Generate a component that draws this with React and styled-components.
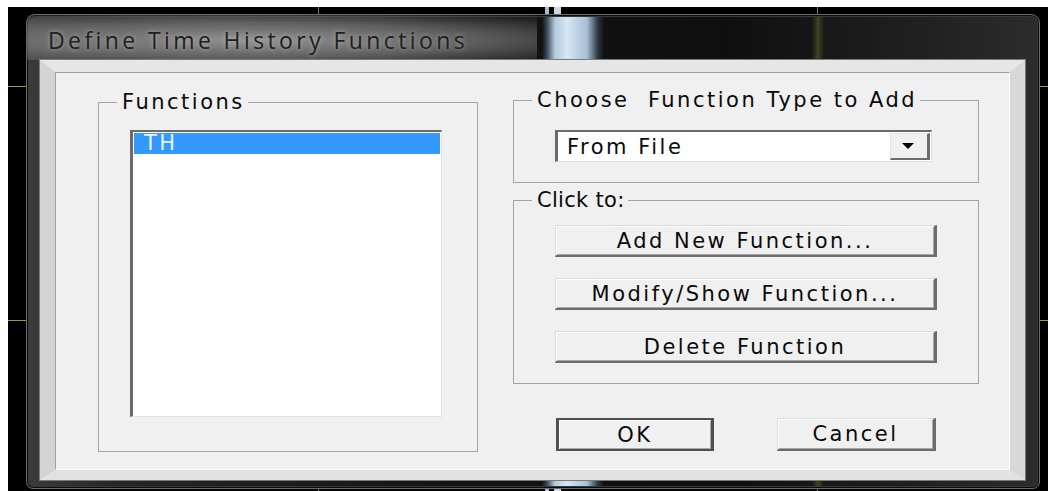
import React from "react";
import styled, { createGlobalStyle } from "styled-components";

const GlobalStyle = createGlobalStyle`
  * {
    box-sizing: border-box;
  }
  html, body {
    margin: 0;
    padding: 0;
    background: #fff;
  }
  body {
    width: 1048px;
    height: 491px;
    overflow: hidden;
    font-family: "DejaVu Sans", "Liberation Sans", sans-serif;
  }
`;

// dark CAD canvas behind the dialog, with a few drawing lines peeking out
const Desktop = styled.div`
  margin: 7px 0 0 8px;
  width: 1040px;
  height: 484px;
  padding: 7px 0 0 18px;
  overflow: hidden;
  background-color: #000;
  background-image:
    linear-gradient(90deg, transparent 310px, #7c7c3c 310px, #7c7c3c 311px, transparent 311px),
    linear-gradient(90deg, transparent 809px, #7c7c3c 809px, #7c7c3c 810px, transparent 810px),
    linear-gradient(90deg, transparent 537px, #a9bccd 537px, #a9bccd 541px, transparent 541px, transparent 546px, #c8d8e6 546px, #c8d8e6 553px, transparent 553px),
    linear-gradient(180deg, transparent 79px, #9a9a48 79px, #9a9a48 80px, transparent 80px, transparent 313px, #9a9a48 313px, #9a9a48 314px, transparent 314px);
`;

const Window = styled.div`
  width: 1014px;
  height: 475px;
  display: flex;
  flex-direction: column;
  padding-bottom: 8px;
  border: 1px solid #6c6c6c;
  border-radius: 9px 9px 7px 7px;
  box-shadow: inset 0 0 0 1px #0c0c0c, inset 0 0 0 2px #383838;
  background:
    linear-gradient(90deg, transparent 515px, rgba(90, 120, 150, 0.55) 520px, rgba(200, 222, 242, 0.9) 528px, #d6e6f4 540px, rgba(185, 210, 235, 0.9) 560px, rgba(70, 95, 120, 0.45) 571px, transparent 577px),
    linear-gradient(90deg, transparent 785px, rgba(120, 120, 50, 0.45) 791px, transparent 797px),
    linear-gradient(90deg, #3b3b3b 0, #262626 90px, #141414 420px, #0f0f0f 700px, #1f1f1f 880px, #2c2c2c 100%);
`;

const TitleBar = styled.div`
  height: 45px;
  display: flex;
  align-items: stretch;
`;

const Title = styled.div`
  display: flex;
  align-items: center;
  width: 510px;
  padding: 4px 0 0 21px;
  font-family: "Open Sans", "Noto Sans", sans-serif;
  font-size: 23px;
  letter-spacing: 3.4px;
  color: #202020;
  white-space: nowrap;
  text-shadow: 0 0 5px rgba(215, 215, 215, 0.6);
  background: radial-gradient(ellipse 100% 85% at 44% 56%, rgba(165, 165, 165, 0.85), rgba(140, 140, 140, 0.6) 45%, rgba(90, 90, 90, 0.2) 78%, rgba(60, 60, 60, 0) 100%);
`;

const ClientArea = styled.div`
  flex: 1;
  display: flex;
  margin: 0 14px 0 13px;
  border-style: solid;
  border-width: 12px 15px 10px 15px;
  border-color: #e6e6e6 #d8d8d8 #e2e2e2 #d4d4d4;
  box-shadow: 0 0 0 1px #7a7a7a;
`;

const Panel = styled.div`
  flex: 1;
  display: flex;
  align-items: flex-start;
  gap: 35px;
  padding: 18px 0 0 42px;
  background: #f0f0f0;
  border: 1px solid;
  border-color: #a0a0a0 #fbfbfb #fbfbfb #a0a0a0;
  font-size: 21px;
  letter-spacing: 2.5px;
  color: #0a0a0a;
`;

const Group = styled.fieldset`
  margin: 0;
  min-inline-size: 0;
  width: ${p => p.$w}px;
  padding: ${p => p.$pad};
  border: 1px solid #a3a3a3;
`;

const Caption = styled.legend`
  margin-left: 18px;
  padding: 0 3px 0 5px;
  line-height: 22px;
  letter-spacing: ${p => p.$tight ? "0.3px" : "inherit"};
`;

const ListBox = styled.div`
  width: 312px;
  height: 287px;
  margin-left: 31px;
  padding: 1px;
  background: #fff;
  border-style: solid;
  border-width: 2px 1px 1px 3px;
  border-color: #6b6b6b #e2e2e2 #e2e2e2 #6b6b6b;
`;

const ListItem = styled.div`
  height: 21px;
  line-height: 21px;
  padding-left: 10px;
  background: ${p => p.$selected ? "#3399ff" : "transparent"};
  color: ${p => p.$selected ? "#e6f5ff" : "#111"};
`;

const Column = styled.div`
  width: 466px;
  margin-top: -2px;
  display: flex;
  flex-direction: column;
  gap: 6px;
`;

const Combo = styled.div`
  width: 377px;
  height: 32px;
  margin-left: 41px;
  display: flex;
  align-items: stretch;
  padding: 1px 1px 1px 9px;
  background: #fff;
  border-style: solid;
  border-width: 2px 1px 1px 3px;
  border-color: #6b6b6b #dedede #dedede #6b6b6b;
`;

const ComboText = styled.span`
  flex: 1;
  display: flex;
  align-items: center;
`;

const DropButton = styled.span`
  width: 40px;
  display: flex;
  align-items: center;
  justify-content: center;
  padding-right: 3px;
  background: #f0f0f0;
  border-style: solid;
  border-width: 1px 3px 2px 1px;
  border-color: #e6e6e6 #6d6d6d #6d6d6d #e6e6e6;
`;

const ActionList = styled.div`
  margin-left: 41px;
  display: flex;
  flex-direction: column;
  gap: 21px;
`;

const PushButton = styled.button`
  width: ${p => p.$w}px;
  height: ${p => p.$h || 32}px;
  padding: 0;
  font-family: "DejaVu Sans", "Liberation Sans", sans-serif;
  font-size: 21px;
  letter-spacing: 2.5px;
  color: #0a0a0a;
  background: #f0f0f0;
  border-style: solid;
  border-width: ${p => p.$primary ? "2px 3px 2px 3px" : "1px 3px 2px 1px"};
  border-color: ${p => p.$primary ? "#505050" : "#dcdcdc #6c6c6c #6c6c6c #dcdcdc"};
  box-shadow: inset 1px 1px #fff, inset -1px -1px #a8a8a8;
`;

const Footer = styled.div`
  display: flex;
  gap: 63px;
  margin-top: 28px;
  padding-left: 43px;
`;

const Arrow = () => (
  <svg width="12" height="6" viewBox="0 0 12 6">
    <polygon points="0,0 12,0 6,6" fill="#000" />
  </svg>
);

const functions = ["TH"];

const App = () => {
  return (
    <>
      <GlobalStyle />
      <Desktop>
        <Window>
          <TitleBar>
            <Title>Define Time History Functions</Title>
          </TitleBar>
          <ClientArea>
            <Panel>
              <Group $w={380} $pad="17px 0 34px 0">
                <Caption>Functions</Caption>
                <ListBox>
                  {functions.map((name, i) => (
                    <ListItem key={name} $selected={i === 0}>{name}</ListItem>
                  ))}
                </ListBox>
              </Group>
              <Column>
                <Group $w={466} $pad="19px 0 20px 0">
                  <Caption>Choose&nbsp; Function Type to Add</Caption>
                  <Combo>
                    <ComboText>From File</ComboText>
                    <DropButton><Arrow /></DropButton>
                  </Combo>
                </Group>
                <Group $w={466} $pad="14px 0 20px 0">
                  <Caption $tight>Click to:</Caption>
                  <ActionList>
                    <PushButton $w={382}>Add New Function...</PushButton>
                    <PushButton $w={382}>Modify/Show Function...</PushButton>
                    <PushButton $w={382}>Delete Function</PushButton>
                  </ActionList>
                </Group>
                <Footer>
                  <PushButton $w={158} $h={33} $primary>OK</PushButton>
                  <PushButton $w={159} $h={33}>Cancel</PushButton>
                </Footer>
              </Column>
            </Panel>
          </ClientArea>
        </Window>
      </Desktop>
    </>
  );
};

export default App;
